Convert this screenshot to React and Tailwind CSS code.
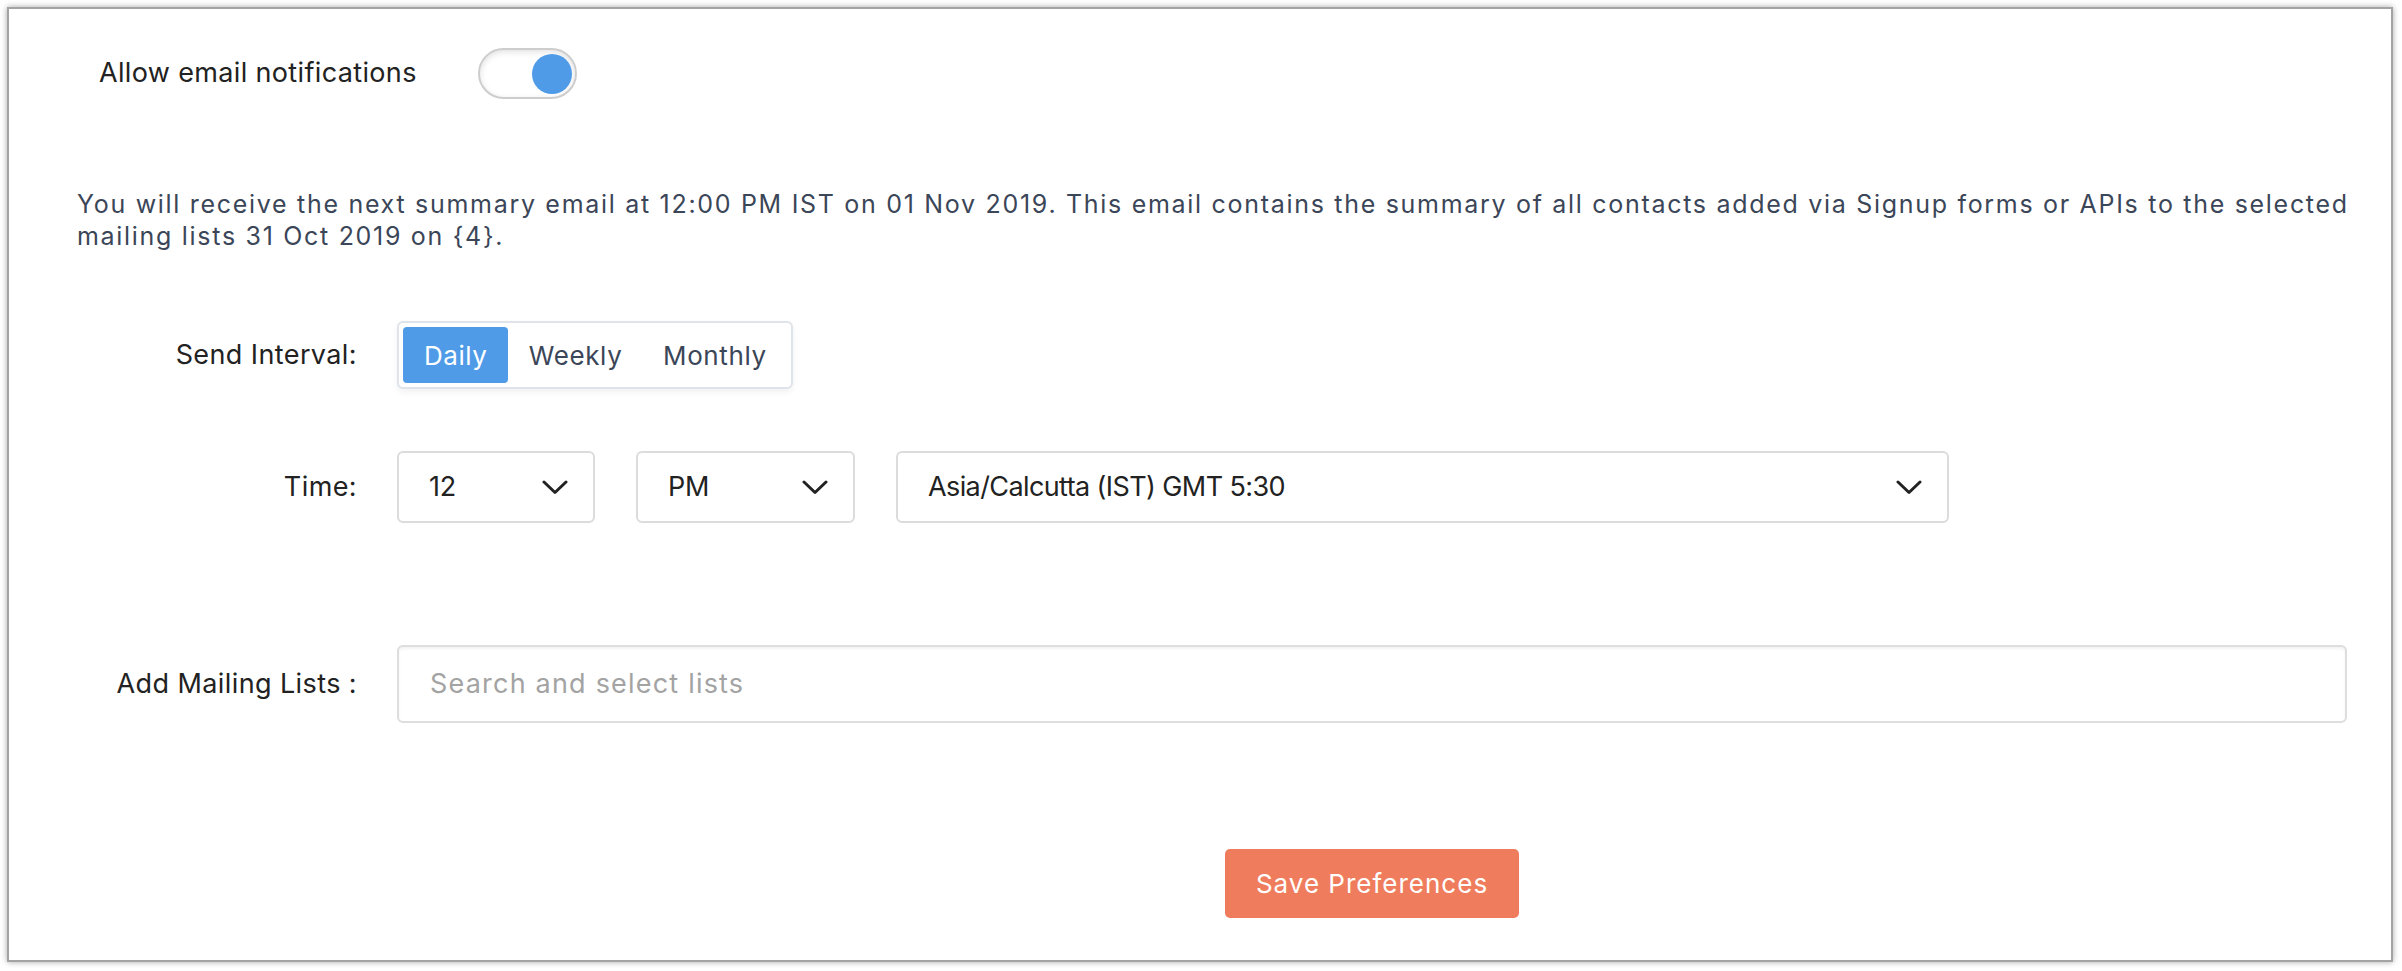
import React from "react";

function Chevron() {
  return (
    <svg width="26" height="15" viewBox="0 0 26 15" fill="none">
      <polyline points="2,2 13,12.5 24,2" stroke="#222" strokeWidth="3" strokeLinecap="round" strokeLinejoin="round" />
    </svg>
  );
}

function Select({ width, value, tight }) {
  return (
    <div
      className={
        tight
          ? "h-[72px] flex items-center justify-between pl-[30px] pr-[25px] border-2 border-[#dcdcdc] rounded-[6px] bg-white text-[27px] text-[#222] tracking-[-0.6px]"
          : "h-[72px] flex items-center justify-between pl-[30px] pr-[25px] border-2 border-[#dcdcdc] rounded-[6px] bg-white text-[27px] text-[#222] tracking-[-0.3px]"
      }
      style={{ width }}
    >
      <span>{value}</span>
      <Chevron />
    </div>
  );
}

export default function App() {
  const font = { fontFamily: "Inter, 'Liberation Sans', sans-serif" };
  return (
    <div className="w-[2402px] h-[971px] bg-white p-[7px]" style={font}>
      <div className="w-[2386px] h-[955px] border-2 border-[#a3a3a3] shadow-[0_0_6px_rgba(0,0,0,0.35)] bg-white">
        {/* toggle row */}
        <div className="pt-[39px] pl-[90px] flex items-center">
          <span className="w-[379px] text-[27px] text-[#222] tracking-[0.35px]">Allow email notifications</span>
          <div className="w-[99px] h-[51px] rounded-full border-2 border-[#cdcdcd] bg-white shadow-[inset_0_2px_6px_rgba(0,0,0,0.12)] flex items-center justify-end pr-[3px]">
            <div className="w-[40px] h-[40px] rounded-full bg-[#4f9be8]" />
          </div>
        </div>

        {/* description */}
        <div className="mt-[89px] pl-[68px] text-[25px] leading-[32px] text-[#3b4658] tracking-[1.7px]">
          <div className="whitespace-nowrap">
            You will receive the next summary email at 12:00 PM IST on 01 Nov 2019. This email contains the summary of all contacts added via Signup forms or APIs to the selected
          </div>
          <div>mailing lists 31 Oct 2019 on {"{4}"}.</div>
        </div>

        {/* send interval */}
        <div className="mt-[69px] flex items-center">
          <div className="w-[388px] pr-[40px] text-right text-[27px] text-[#222] tracking-[0.4px]">Send Interval:</div>
          <div className="w-[396px] h-[68px] p-[4px] flex border-2 border-[#dfe4ea] rounded-[6px] bg-white shadow-[0_3px_6px_rgba(0,0,0,0.06)] text-[26px] tracking-[0.6px]">
            <div className="w-[106px] h-full flex items-center justify-center rounded-[4px] bg-[#4f9be8] text-white">Daily</div>
            <div className="w-[135px] h-full flex items-center justify-center text-[#3b4658]">Weekly</div>
            <div className="w-[145px] h-full flex items-center justify-center text-[#3b4658]">Monthly</div>
          </div>
        </div>

        {/* time */}
        <div className="mt-[62px] flex items-center">
          <div className="w-[388px] pr-[40px] text-right text-[27px] text-[#222] tracking-[0.4px]">Time:</div>
          <div className="flex items-center gap-[41px]">
            <Select width={198} value="12" />
            <Select width={219} value="PM" />
            <Select width={1053} value="Asia/Calcutta (IST) GMT 5:30" tight />
          </div>
        </div>

        {/* mailing lists */}
        <div className="mt-[122px] flex items-center">
          <div className="w-[388px] pr-[40px] text-right text-[27px] text-[#222] tracking-[0.4px]">Add Mailing Lists :</div>
          <div className="w-[1950px] h-[78px] flex items-center pl-[31px] border-2 border-[#dedede] rounded-[6px] bg-white shadow-[inset_0_2px_3px_rgba(0,0,0,0.05)] text-[27px] text-[#a3a3a3] tracking-[1.2px]">
            Search and select lists
          </div>
        </div>

        {/* save */}
        <div className="mt-[126px] pl-[388px] w-[2338px] flex justify-center">
          <div className="w-[294px] h-[69px] flex items-center justify-center rounded-[5px] bg-[#ef7d5d] text-white text-[26px] tracking-[1px]">
            Save Preferences
          </div>
        </div>
      </div>
    </div>
  );
}
